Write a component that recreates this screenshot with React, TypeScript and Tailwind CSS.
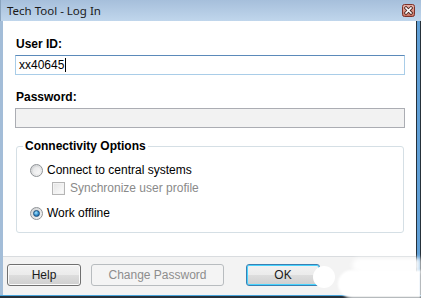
import React from "react";

function CloseButton() {
  return (
    <svg width="13" height="13" viewBox="0 0 13 13">
      <defs>
        <linearGradient id="cb" x1="0" y1="0" x2="0" y2="1">
          <stop offset="0" stopColor="#e9b4ab" />
          <stop offset="1" stopColor="#c8705f" />
        </linearGradient>
      </defs>
      <rect x="0.5" y="0.5" width="12" height="12" rx="2" fill="url(#cb)" stroke="#7d3129" />
      <path d="M4 4 L9 9 M9 4 L4 9" stroke="#4a2420" strokeWidth="3.2" strokeLinecap="square" />
      <path d="M4 4 L9 9 M9 4 L4 9" stroke="#ffffff" strokeWidth="1.6" strokeLinecap="square" />
    </svg>
  );
}

function Radio({ checked }: { checked?: boolean }) {
  return (
    <span className="flex h-[13px] w-[13px] items-center justify-center rounded-full border border-[#8f9397] bg-gradient-to-br from-[#cfd1d3] to-[#f7f7f7]">
      {checked ? (
        <span className="h-[7px] w-[7px] rounded-full border border-[#1c4f7c] bg-[radial-gradient(circle_at_40%_35%,#a6e6ff,#2a86c8_60%,#174f86)]" />
      ) : (
        <span className="h-[7px] w-[7px] rounded-full bg-gradient-to-br from-[#e4e5e6] to-[#fafafa]" />
      )}
    </span>
  );
}

function Button({
  children,
  width,
  disabled,
  primary,
}: {
  children: React.ReactNode;
  width: string;
  disabled?: boolean;
  primary?: boolean;
}) {
  const base =
    "flex h-[22px] items-center justify-center rounded-[3px] border text-[12px] leading-none";
  if (disabled)
    return (
      <div className={`${base} ${width} border-[#b8bcbf] bg-[#f4f4f4] text-[#8d8d8d]`}>{children}</div>
    );
  return (
    <div
      className={`${base} ${width} ${
        primary ? "border-[#3c7fb1] shadow-[inset_0_0_0_1px_#48d4ff]" : "border-[#707070] shadow-[inset_0_0_0_1px_#fbfbfb]"
      } bg-[linear-gradient(#f2f2f2_0%,#ebebeb_50%,#dddddd_51%,#cfcfcf_100%)] text-[#1b1b1b]`}
    >
      {children}
    </div>
  );
}

export default function App() {
  return (
    <div className="relative flex h-[298px] w-[421px] flex-col overflow-hidden bg-[#2f3a43] font-['Liberation_Sans',Arial,sans-serif]">
      {/* title bar */}
      <div className="flex h-[21px] items-center justify-between border-l border-[#8aa4bf] bg-gradient-to-b from-[#a6bfdb] to-[#c0d6ec] pl-[6px] pr-[6px]">
        <span className="font-['Noto_Sans',sans-serif] text-[11.5px] leading-none text-[#1a1a1a]">
          Tech Tool - Log In
        </span>
        <CloseButton />
      </div>

      <div className="flex flex-1">
        <div className="flex flex-1 flex-col border-l-[3px] border-[#a3bdd8] bg-white">
          <div className="flex flex-1 flex-col pl-[12px] pr-[11px] pt-[16px]">
            <div className="pl-[1px] text-[12px] font-bold leading-[14px] text-black">User ID:</div>
            <div className="mt-[4px] flex h-[20px] items-center border border-[#a9cde8] border-t-[#5b8aba] pl-[3px] text-[12px] text-black">
              xx40645
              <span className="ml-[1px] h-[14px] w-px bg-black" />
            </div>

            <div className="mt-[15px] pl-[1px] text-[12px] font-bold leading-[14px] text-black">Password:</div>
            <div className="mt-[4px] h-[20px] border border-[#abadb3] bg-[#f2f2f2]" />

            <fieldset className="mx-[1px] mt-[11px] rounded-[3px] border border-[#d5dfe5] pb-[10px] pl-[6px]">
              <legend className="px-[2px] text-[12px] font-bold leading-[15px] text-black">
                Connectivity Options
              </legend>
              <div className="flex flex-col pl-[7px] pt-[7px] text-[12px] text-black">
                <div className="flex h-[18px] items-center gap-[4px]">
                  <Radio />
                  <span>Connect to central systems</span>
                </div>
                <div className="flex h-[18px] items-center gap-[5px] pl-[22px] text-[#8a8a8a]">
                  <span className="flex h-[13px] w-[13px] items-center justify-center border border-[#b5b5b5] bg-[#f3f3f3]">
                    <span className="h-[9px] w-[9px] bg-gradient-to-br from-[#e6e6e6] to-[#fbfbfb]" />
                  </span>
                  <span>Synchronize user profile</span>
                </div>
                <div className="mt-[7px] flex h-[18px] items-center gap-[4px]">
                  <Radio checked />
                  <span>Work offline</span>
                </div>
              </div>
            </fieldset>
          </div>

          {/* button bar */}
          <div className="flex h-[39px] items-start gap-[10px] border-t border-[#d9dcdf] bg-[#f3f3f3] pl-[4px] pt-[7px]">
            <Button width="w-[74px]">Help</Button>
            <Button width="w-[133px]" disabled>
              Change Password
            </Button>
            <div className="ml-[12px]">
              <Button width="w-[74px]" primary>
                OK
              </Button>
            </div>
          </div>
        </div>
        <div className="w-[5px] border-x border-[#26313a] bg-[#5f9fd6]" />
      </div>
      <div className="h-[3px] border-t border-[#4aa6dd] bg-[#26313a]" />

      {/* watermark smudge */}
      <div className="absolute left-[313px] top-[266px] h-[22px] w-[22px] rounded-full bg-white blur-[0.5px]" />
      <div className="absolute left-[338px] top-[270px] h-[28px] w-[83px] rounded-l-full bg-white blur-[1px]" />
      <div className="absolute left-[352px] top-[258px] h-[14px] w-[69px] rounded-l-full bg-white/90 blur-[2px]" />
    </div>
  );
}
